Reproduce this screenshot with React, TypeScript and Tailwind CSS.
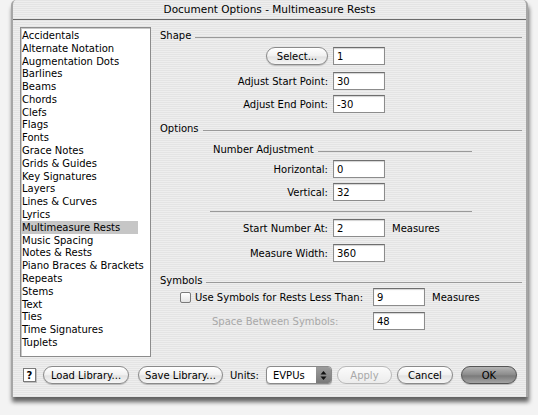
import React from "react";

/* Document Options dialog – Mac OS X Aqua, grayscale */

const CATEGORIES = [
  "Accidentals",
  "Alternate Notation",
  "Augmentation Dots",
  "Barlines",
  "Beams",
  "Chords",
  "Clefs",
  "Flags",
  "Fonts",
  "Grace Notes",
  "Grids & Guides",
  "Key Signatures",
  "Layers",
  "Lines & Curves",
  "Lyrics",
  "Multimeasure Rests",
  "Music Spacing",
  "Notes & Rests",
  "Piano Braces & Brackets",
  "Repeats",
  "Stems",
  "Text",
  "Ties",
  "Time Signatures",
  "Tuplets",
];

function Field({ value }: { value: string }) {
  return (
    <div className="flex h-[18px] w-[52px] items-center border border-[#8c8c8c] border-t-[#6e6e6e] bg-white pl-[3px] shadow-[inset_0_1px_1px_rgba(0,0,0,0.18)]">
      {value}
    </div>
  );
}

function Pill({
  label,
  w,
  kind = "normal",
}: {
  label: string;
  w: string;
  kind?: "normal" | "default" | "disabled";
}) {
  const base =
    "flex h-[18px] items-center justify-center whitespace-nowrap rounded-full border shadow-[0_1px_1px_rgba(0,0,0,0.2)]";
  const look =
    kind === "default"
      ? "border-[#555] bg-[linear-gradient(#b4b4b4,#8a8a8a_50%,#7a7a7a_55%,#a4a4a4)] text-black"
      : kind === "disabled"
        ? "border-[#b8b8b8] bg-[linear-gradient(#fbfbfb,#ececec)] text-[#a8a8a8] shadow-none"
        : "border-[#8a8a8a] bg-[linear-gradient(#ffffff,#f0f0f0_50%,#e2e2e2_55%,#f6f6f6)] text-black";
  return <div className={`${base} ${look} ${w}`}>{label}</div>;
}

function GroupHeader({ title }: { title: string }) {
  return (
    <div className="flex h-[12px] items-center">
      <span>{title}</span>
      <div className="ml-[4px] mt-[5px] h-px flex-1 bg-[#9a9a9a]" />
    </div>
  );
}

function Row({
  label,
  value,
  mt,
  after,
}: {
  label: string;
  value: string;
  mt: string;
  after?: string;
}) {
  return (
    <div className={`flex h-[18px] items-center ${mt}`}>
      <span className="w-[168px] whitespace-nowrap text-right">{label}</span>
      <div className="ml-[5px]">
        <Field value={value} />
      </div>
      {after && <span className="ml-[7px]">{after}</span>}
    </div>
  );
}

export default function App() {
  return (
    <div className="relative h-[415px] w-[538px] overflow-hidden bg-[#f3f3f3] font-['DejaVu_Sans',sans-serif] text-[10px] text-black">
      {/* ── Window ── */}
      <div className="ml-[11px] flex h-[397px] w-[517px] flex-col rounded-t-[5px] border-l-2 border-r-2 border-[#a6a6a6] bg-[repeating-linear-gradient(0deg,#e4e4e4_0px,#e4e4e4_1px,#eeeeee_1px,#eeeeee_2px)] shadow-[1px_5px_4px_rgba(0,0,0,0.6)]">
        {/* Title bar */}
        <div className="flex h-[20px] shrink-0 items-center justify-center border-b border-[#6a6a6a] text-[10.5px]">
          Document Options - Multimeasure Rests
        </div>

        <div className="flex pt-[7px] pl-[7px]">
          {/* Category list */}
          <div className="h-[330px] w-[131px] shrink-0 border border-[#8c8c8c] bg-white pt-[1px] shadow-[inset_1px_1px_0_#c8c8c8]">
            {CATEGORIES.map((c) => (
              <div
                key={c}
                className={`flex h-[12.8px] w-[117px] items-center whitespace-nowrap pl-[1px] ${
                  c === "Multimeasure Rests" ? "bg-[#c6c6c6]" : ""
                }`}
              >
                {c}
              </div>
            ))}
          </div>

          {/* Settings */}
          <div className="ml-[9px] flex flex-1 flex-col pr-[4px] pt-[2px]">
            <GroupHeader title="Shape" />
            <div className="mt-[6px] flex h-[18px] items-center">
              <div className="flex w-[168px] justify-end">
                <Pill label="Select..." w="w-[62px]" />
              </div>
              <div className="ml-[5px]">
                <Field value="1" />
              </div>
            </div>
            <Row label="Adjust Start Point:" value="30" mt="mt-[7px]" />
            <Row label="Adjust End Point:" value="-30" mt="mt-[5px]" />

            <div className="mt-[9px]">
              <GroupHeader title="Options" />
            </div>
            <div className="ml-[50px] mt-[9px] flex h-[12px] w-[262px] items-center">
              <span className="ml-[3px]">Number Adjustment</span>
              <div className="ml-[4px] mt-[5px] h-px flex-1 bg-[#9a9a9a]" />
            </div>
            <Row label="Horizontal:" value="0" mt="mt-[5px]" />
            <Row label="Vertical:" value="32" mt="mt-[5px]" />
            <div className="ml-[50px] mt-[10px] h-px w-[262px] bg-[#9a9a9a]" />
            <Row
              label="Start Number At:"
              value="2"
              mt="mt-[7px]"
              after="Measures"
            />
            <Row label="Measure Width:" value="360" mt="mt-[7px]" />

            <div className="mt-[12px]">
              <GroupHeader title="Symbols" />
            </div>
            <div className="mt-[2px] flex h-[18px] items-center">
              <div className="ml-[20px] h-[11px] w-[11px] shrink-0 rounded-[2px] border border-[#7a7a7a] bg-[linear-gradient(#ffffff,#e4e4e4)]" />
              <span className="ml-[4px] w-[178px] whitespace-nowrap">
                Use Symbols for Rests Less Than:
              </span>
              <Field value="9" />
              <span className="ml-[7px]">Measures</span>
            </div>
            <div className="mt-[6px] flex h-[18px] items-center">
              <span className="ml-[52px] w-[161px] whitespace-nowrap text-[#a8a8a8]">
                Space Between Symbols:
              </span>
              <Field value="48" />
            </div>
          </div>
        </div>

        {/* Bottom buttons */}
        <div className="mt-[9px] flex h-[18px] items-center pl-[10px]">
          <div className="flex h-[14px] w-[13px] items-center justify-center border border-[#7a7a7a] bg-white text-[10px] font-bold shadow-[1px_1px_0_#bdbdbd]">
            ?
          </div>
          <div className="ml-[7px]">
            <Pill label="Load Library..." w="w-[86px]" />
          </div>
          <div className="ml-[9px]">
            <Pill label="Save Library..." w="w-[85px]" />
          </div>
          <span className="ml-[7px]">Units:</span>
          <div className="ml-[7px] flex h-[18px] w-[66px] items-center overflow-hidden rounded-[4px] border border-[#8a8a8a] bg-white shadow-[0_1px_1px_rgba(0,0,0,0.2)]">
            <span className="flex-1 pl-[6px]">EVPUs</span>
            <div className="flex h-full w-[15px] items-center justify-center bg-[linear-gradient(#9c9c9c,#7a7a7a)]">
              <svg width="7" height="11" viewBox="0 0 7 11">
                <path d="M3.5 1 L6.5 4.5 H0.5 Z" fill="#111" />
                <path d="M3.5 10 L6.5 6.5 H0.5 Z" fill="#111" />
              </svg>
            </div>
          </div>
          <div className="ml-[5px]">
            <Pill label="Apply" w="w-[55px]" kind="disabled" />
          </div>
          <div className="ml-[5px]">
            <Pill label="Cancel" w="w-[56px]" />
          </div>
          <div className="ml-[8px]">
            <Pill label="OK" w="w-[56px]" kind="default" />
          </div>
        </div>
      </div>
    </div>
  );
}
